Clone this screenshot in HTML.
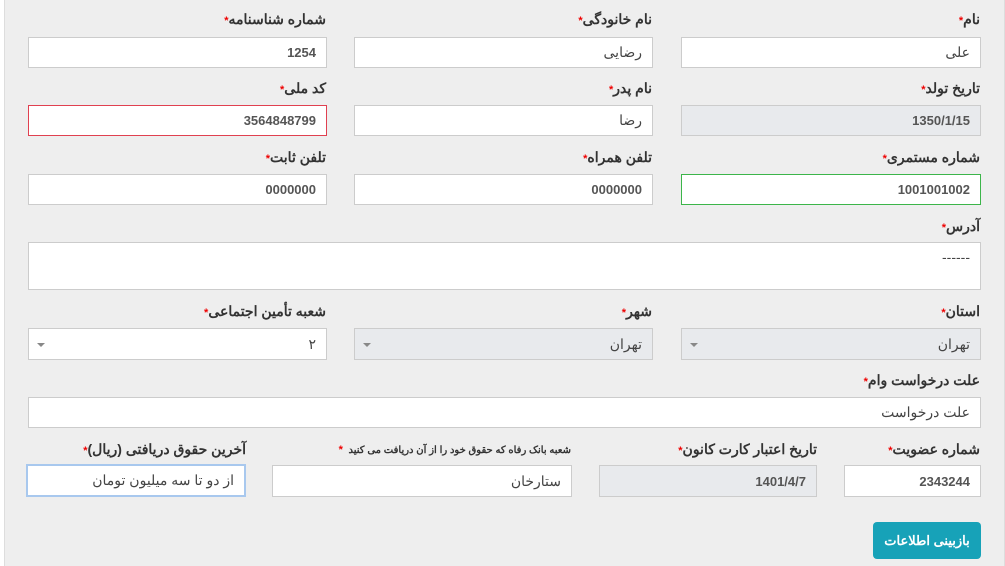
<!DOCTYPE html><html><head><meta charset="utf-8"><style>
body{margin:0;width:1005px;height:566px;background:#fff;font-family:"Liberation Sans","Noto Sans CJK SC",sans-serif;overflow:hidden}
.wrap{position:absolute;left:4px;top:0;width:999px;height:566px;background:#eeeeee;border-left:1px solid #ddd;border-right:1px solid #ddd}
.l{position:absolute;direction:rtl;font-size:14px;font-weight:bold;color:#333;text-align:right;white-space:nowrap}
.l b{color:#e00;font-size:11px}
.i{position:absolute;box-sizing:border-box;background:#fff;border:1px solid #ccc;direction:rtl;font-size:14px;color:#444;padding:0 10px;display:flex;align-items:center;white-space:nowrap}
.g{background:#e8eaed}
.n{font-weight:bold;color:#555;font-size:13px}
.s::after{content:"";position:absolute;left:8px;top:14px;border:4px solid transparent;border-top:4px solid #888}
</style></head><body><div class="wrap"></div>
<div class="l" style="right:25px;top:11px">نام<b>*</b></div>
<div class="l" style="right:353px;top:11px">نام خانودگی<b>*</b></div>
<div class="l" style="right:679px;top:11px">شماره شناسنامه<b>*</b></div>
<div class="i" style="left:681px;top:37px;width:300px;height:31px">علی</div>
<div class="i" style="left:354px;top:37px;width:299px;height:31px">رضایی</div>
<div class="i n" style="left:28px;top:37px;width:299px;height:31px">1254</div>
<div class="l" style="right:25px;top:80px">تاریخ تولد<b>*</b></div>
<div class="l" style="right:353px;top:80px">نام پدر<b>*</b></div>
<div class="l" style="right:679px;top:80px">کد ملی<b>*</b></div>
<div class="i g n" style="left:681px;top:105px;width:300px;height:31px">1350/1/15</div>
<div class="i" style="left:354px;top:105px;width:299px;height:31px">رضا</div>
<div class="i n" style="left:28px;top:105px;width:299px;height:31px;border-color:#e04050">3564848799</div>
<div class="l" style="right:25px;top:149px">شماره مستمری<b>*</b></div>
<div class="l" style="right:353px;top:149px">تلفن همراه<b>*</b></div>
<div class="l" style="right:679px;top:149px">تلفن ثابت<b>*</b></div>
<div class="i n" style="left:681px;top:174px;width:300px;height:31px;border-color:#3cb54a">1001001002</div>
<div class="i n" style="left:354px;top:174px;width:299px;height:31px">0000000</div>
<div class="i n" style="left:28px;top:174px;width:299px;height:31px">0000000</div>
<div class="l" style="right:25px;top:218px">آدرس<b>*</b></div>
<div class="i" style="left:28px;top:242px;width:953px;height:48px;align-items:flex-start;padding-top:6px">------</div>
<div class="l" style="right:25px;top:303px">استان<b>*</b></div>
<div class="l" style="right:353px;top:303px">شهر<b>*</b></div>
<div class="l" style="right:679px;top:303px">شعبه تأمین اجتماعی<b>*</b></div>
<div class="i g s" style="left:681px;top:328px;width:300px;height:32px">تهران</div>
<div class="i g s" style="left:354px;top:328px;width:299px;height:32px">تهران</div>
<div class="i s" style="left:28px;top:328px;width:299px;height:32px">۲</div>
<div class="l" style="right:25px;top:372px">علت درخواست وام<b>*</b></div>
<div class="i" style="left:28px;top:397px;width:953px;height:31px">علت درخواست</div>
<div class="l" style="right:25px;top:441px">شماره عضویت<b>*</b></div>
<div class="l" style="right:188px;top:441px">تاریخ اعتبار کارت کانون<b>*</b></div>
<div class="l" style="right:434px;top:444px;font-size:10px">شعبه بانک رفاه که حقوق خود را از آن دریافت می کنید &nbsp;<b>*</b></div>
<div class="l" style="right:759px;top:441px">آخرین حقوق دریافتی (ریال)<b>*</b></div>
<div class="i n" style="left:844px;top:465px;width:137px;height:32px">2343244</div>
<div class="i g n" style="left:599px;top:465px;width:218px;height:32px">1401/4/7</div>
<div class="i" style="left:272px;top:465px;width:300px;height:32px">ستارخان</div>
<div class="i" style="left:26px;top:464px;width:220px;height:33px;border:2px solid #a8c8ee">از دو تا سه میلیون تومان</div>
<div style="position:absolute;left:873px;top:522px;width:108px;height:37px;background:#17a2b8;border-radius:4px;color:#fff;font-size:13px;font-weight:bold;display:flex;align-items:center;justify-content:center;direction:rtl">بازبینی اطلاعات</div>
</body></html>
